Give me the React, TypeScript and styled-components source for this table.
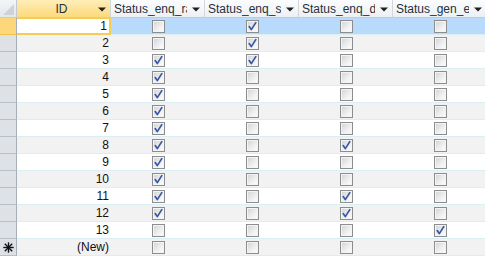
import React from "react";
import styled, { createGlobalStyle } from "styled-components";

const GlobalStyle = createGlobalStyle`
  html, body {
    margin: 0;
    padding: 0;
    background: #ffffff;
    overflow: hidden;
  }
  body {
    font-family: "Liberation Sans", Arial, sans-serif;
  }
`;

type RowData = { id: string; checks: boolean[] };

const rows: RowData[] = [
  { id: "1", checks: [false, true, false, false] },
  { id: "2", checks: [false, true, false, false] },
  { id: "3", checks: [true, true, false, false] },
  { id: "4", checks: [true, false, false, false] },
  { id: "5", checks: [true, false, false, false] },
  { id: "6", checks: [true, false, false, false] },
  { id: "7", checks: [true, false, false, false] },
  { id: "8", checks: [true, false, true, false] },
  { id: "9", checks: [true, false, false, false] },
  { id: "10", checks: [true, false, false, false] },
  { id: "11", checks: [true, false, true, false] },
  { id: "12", checks: [true, false, true, false] },
  { id: "13", checks: [false, false, false, true] },
  { id: "(New)", checks: [false, false, false, false] },
];

const columns = ["Status_enq_ra", "Status_enq_s", "Status_enq_d", "Status_gen_en"];

function DropArrow() {
  return (
    <svg width="8" height="5" viewBox="0 0 8 5">
      <path d="M0 0.5 H8 L4 4.5 Z" fill="#1f1f1f" />
    </svg>
  );
}

function Check() {
  return (
    <svg width="11" height="11" viewBox="0 0 11 11">
      <path
        d="M2.2 5.6 L4.3 8.6 L8.8 1.6"
        fill="none"
        stroke="#3a55a6"
        strokeWidth="1.7"
        strokeLinecap="round"
        strokeLinejoin="round"
      />
    </svg>
  );
}

function NewStar() {
  return (
    <svg width="11" height="11" viewBox="0 0 11 11">
      <g stroke="#111" strokeWidth="1.4" strokeLinecap="square">
        <line x1="5.5" y1="1" x2="5.5" y2="10" />
        <line x1="1" y1="5.5" x2="10" y2="5.5" />
        <line x1="2.3" y1="2.3" x2="8.7" y2="8.7" />
        <line x1="8.7" y1="2.3" x2="2.3" y2="8.7" />
      </g>
    </svg>
  );
}

export default function App() {
  return (
    <>
      <GlobalStyle />
      <Sheet>
        <HeaderRow>
          <Corner>
            <CornerTriangle />
          </Corner>
          <HeadCell $active>
            <HeadLabel $center>ID</HeadLabel>
            <ArrowBox>
              <DropArrow />
            </ArrowBox>
          </HeadCell>
          {columns.map((c) => (
            <HeadCell key={c}>
              <HeadLabel>{c}</HeadLabel>
              <ArrowBox>
                <DropArrow />
              </ArrowBox>
            </HeadCell>
          ))}
        </HeaderRow>
        {rows.map((r, i) => {
          const current = i === 0;
          return (
            <Row key={r.id} $alt={i % 2 === 1} $current={current}>
              <Selector $current={current}>
                {r.id === "(New)" && <NewStar />}
              </Selector>
              <IdCell $current={current}>{r.id}</IdCell>
              {r.checks.map((v, j) => (
                <CheckCell key={j}>
                  <CheckBox>{v && <Check />}</CheckBox>
                </CheckCell>
              ))}
            </Row>
          );
        })}
      </Sheet>
    </>
  );
}

const Sheet = styled.div`
  width: 485px;
  height: 258px;
  overflow: hidden;
  background: #ffffff;
  font-size: 12px;
  color: #111;
`;

const HeaderRow = styled.div`
  display: flex;
  height: 18px;
  box-sizing: border-box;
  border-bottom: 1px solid #c5cad1;
  background: linear-gradient(#fbfcfd, #edf0f3);
`;

const Corner = styled.div`
  position: relative;
  flex: 0 0 17px;
  box-sizing: border-box;
  border-right: 1px solid #c3c8cf;
  background: linear-gradient(#f3f5f7, #e3e7eb);
`;

const CornerTriangle = styled.div`
  position: absolute;
  right: 2px;
  bottom: 2px;
  width: 0;
  height: 0;
  border-left: 11px solid transparent;
  border-bottom: 11px solid #cdd2d8;
`;

const HeadCell = styled.div<{ $active?: boolean }>`
  flex: 0 0 94px;
  width: 94px;
  min-width: 0;
  display: flex;
  align-items: center;
  box-sizing: border-box;
  height: 18px;
  margin-bottom: -1px;
  border-right: 1px solid #d3d7dc;
  padding-left: 3px;
  background: ${(p) =>
    p.$active ? "linear-gradient(#ffeeb8, #fcd97c)" : "transparent"};
  border-bottom: ${(p) => (p.$active ? "1px solid #f0c44a" : "1px solid #c5cad1")};
  color: #26313e;
`;

const HeadLabel = styled.span<{ $center?: boolean }>`
  flex: 1 1 0;
  min-width: 0;
  overflow: hidden;
  white-space: nowrap;
  text-align: ${(p) => (p.$center ? "center" : "left")};
  padding-left: ${(p) => (p.$center ? "10px" : "0")};
  line-height: 16px;
`;

const ArrowBox = styled.span`
  flex: 0 0 17px;
  display: flex;
  justify-content: center;
  align-items: center;
  padding-top: 2px;
`;

const Row = styled.div<{ $alt: boolean; $current: boolean }>`
  display: flex;
  height: 17px;
  box-sizing: border-box;
  border-bottom: 1px solid #daeef4;
  background: ${(p) => (p.$current ? "#b8dafd" : p.$alt ? "#f2f2f2" : "#ffffff")};
`;

const Selector = styled.div<{ $current: boolean }>`
  flex: 0 0 17px;
  height: 17px;
  margin-bottom: -1px;
  box-sizing: border-box;
  display: flex;
  align-items: center;
  justify-content: center;
  border-right: 1px solid #a7aeb6;
  border-bottom: 1px solid ${(p) => (p.$current ? "#f0c44a" : "#b9bfc6")};
  background: ${(p) => (p.$current ? "#fcd77b" : "#dee2e7")};
`;

const IdCell = styled.div<{ $current: boolean }>`
  flex: 0 0 94px;
  box-sizing: border-box;
  height: ${(p) => (p.$current ? "18px" : "16px")};
  margin-top: ${(p) => (p.$current ? "-1px" : "0")};
  text-align: right;
  padding-right: 2px;
  background: ${(p) => (p.$current ? "#ffffff" : "transparent")};
  border: ${(p) => (p.$current ? "2px solid #f4cd55" : "none")};
  border-left: none;
  line-height: ${(p) => (p.$current ? "14px" : "16px")};
`;

const CheckCell = styled.div`
  flex: 0 0 94px;
  display: flex;
  align-items: center;
  justify-content: center;
  height: 16px;
`;

const CheckBox = styled.span`
  width: 13px;
  height: 13px;
  box-sizing: border-box;
  border: 1px solid #8c8d8e;
  box-shadow: inset 0 0 0 1px #f4f4f4;
  background: linear-gradient(135deg, #cfd1d3 0%, #eeeeef 55%, #ffffff 100%);
  display: flex;
  align-items: center;
  justify-content: center;
  overflow: hidden;
`;
